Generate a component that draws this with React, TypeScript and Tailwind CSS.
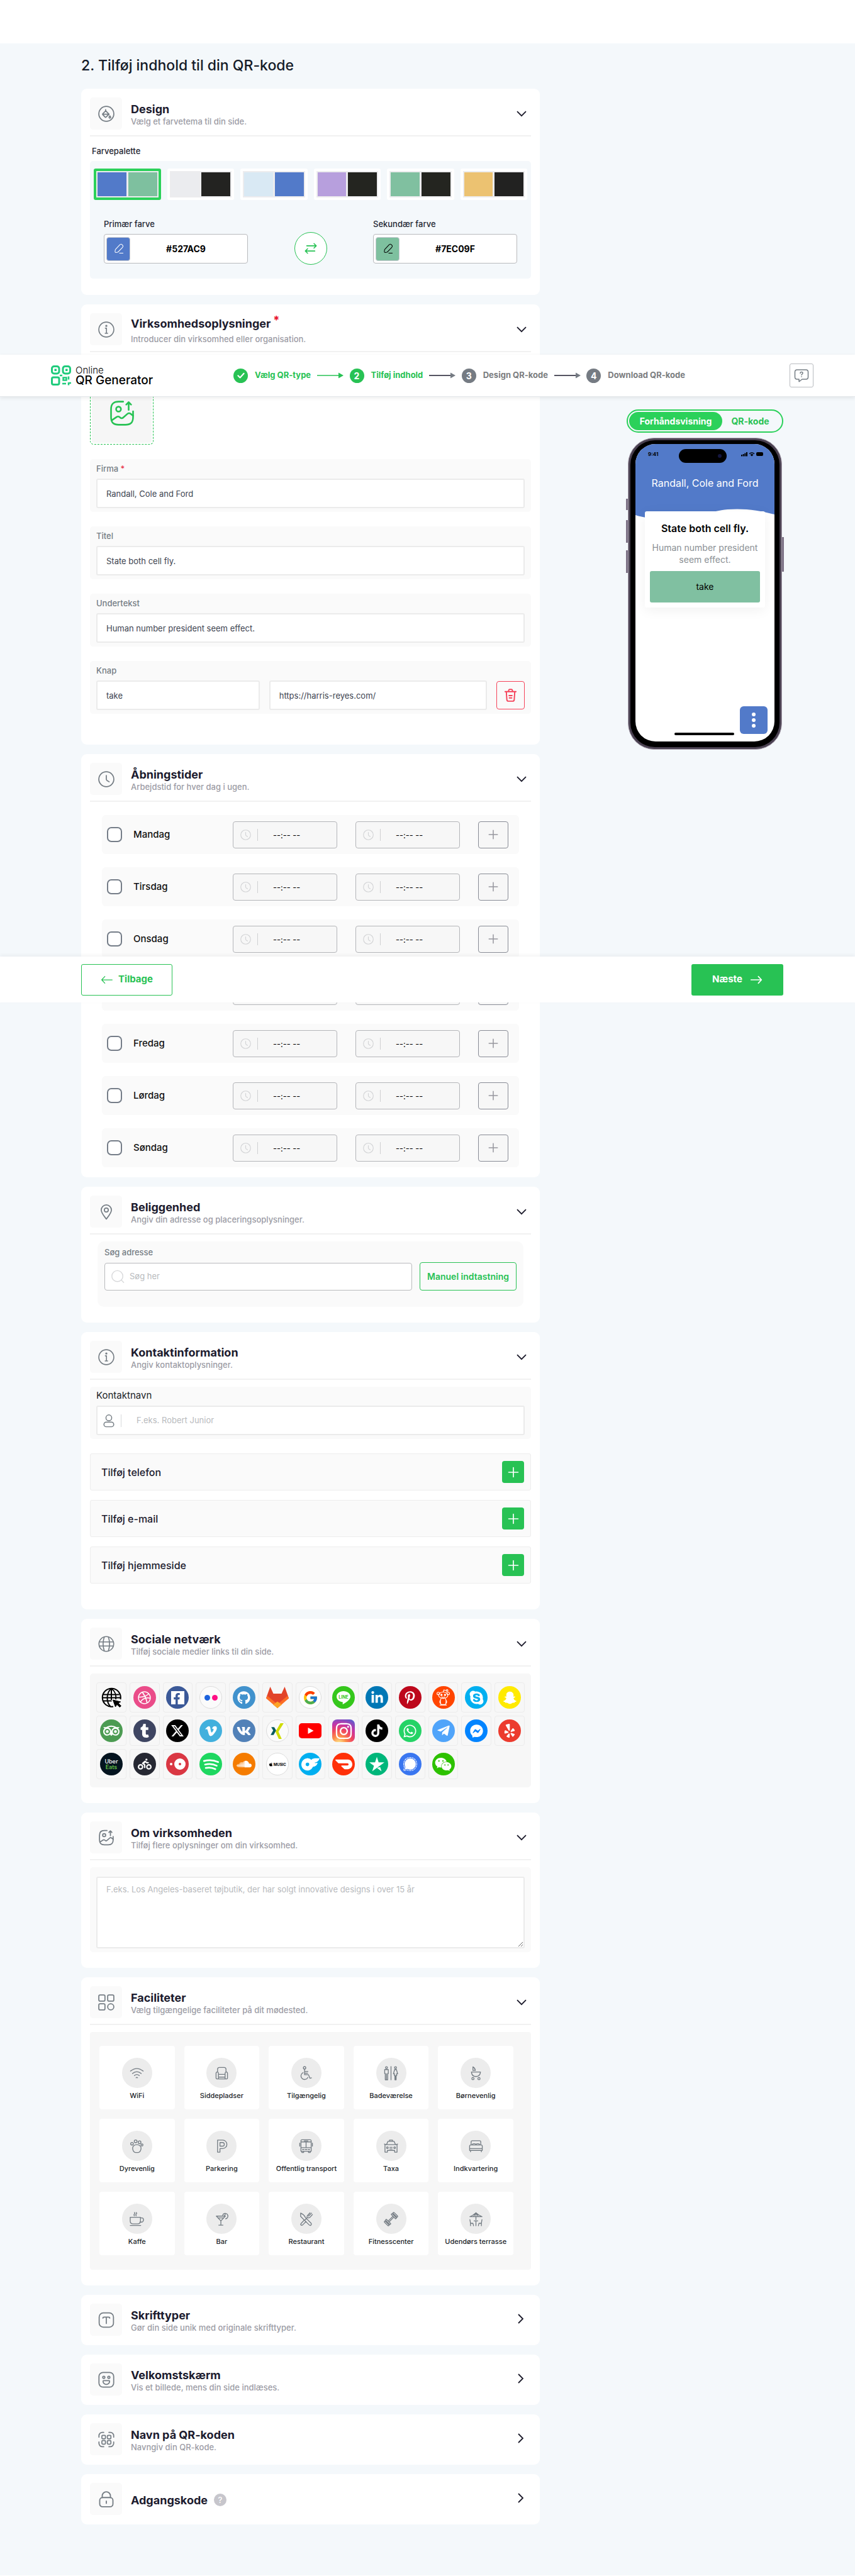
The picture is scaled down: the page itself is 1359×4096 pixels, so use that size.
import { useState, type ReactNode } from "react";
import {
  FaApple, FaBiking, FaDribbble, FaFacebookF, FaFacebookMessenger, FaGithub, FaInstagram,
  FaLinkedinIn, FaPinterestP, FaSkype, FaSnapchatGhost, FaSoundcloud, FaTelegramPlane,
  FaTiktok, FaTumblr, FaVimeoV, FaVk, FaWeixin, FaWhatsapp, FaYelp,
} from "react-icons/fa";
import { FaXTwitter } from "react-icons/fa6";
import { FcGoogle } from "react-icons/fc";
import { SiDoordash, SiOnlyfans, SiSignal, SiTripadvisor, SiTrustpilot } from "react-icons/si";

/* ---------- line icons ---------- */

function Line({ children, className = "size-[26px]", w = 1.6 }: { children: ReactNode; className?: string; w?: number }) {
  return (
    <svg viewBox="0 0 24 24" fill="none" stroke="currentColor" strokeWidth={w} strokeLinecap="round" strokeLinejoin="round" className={className} aria-hidden="true">
      {children}
    </svg>
  );
}

const InfoIcon = () => (
  <Line w={1.5}>
    <circle cx="12" cy="12" r="11" />
    <path d="M10.5 10h1.700v7.500M10.300 17.500h3.600" />
    <circle cx="12" cy="6.600" r=".8" />
  </Line>
);
const BucketIcon = () => (
  <Line>
    <circle cx="12" cy="12" r="11" />
    <path d="M11 5.800v2.600M11 7.600l5 4.900-4.400 4.300a1 1 0 0 1-1.400 0L6.800 13.300a1 1 0 0 1 0-1.400zM6.600 12.600H16" />
    <path d="M17.200 15c.9 1.200 1.200 1.500 1.200 2.100a1.200 1.200 0 0 1-2.400 0c0-.6.3-.9 1.200-2.100z" />
  </Line>
);
const ClockIcon = ({ className }: { className?: string }) => (
  <Line className={className}>
    <circle cx="12" cy="12" r="11" />
    <path d="M12 6.500v5.500q.1 1 .9 1.800l3.300 2" />
  </Line>
);
const PinIcon = () => (
  <Line>
    <path d="M12 22.500C8.500 18 4.500 13.500 4.500 9.300a7.500 7.500 0 0 1 15 0c0 4.200-4 8.700-7.500 13.200z" />
    <circle cx="12" cy="9.300" r="2.900" />
  </Line>
);
const GlobeIcon = () => (
  <Line w={1.5}>
    <circle cx="12" cy="12" r="10.800" />
    <path d="M1.500 9h21M1.500 15h21M9 1.700c-2.300 6.800-2.300 13.800 0 20.600M15 1.700c2.300 6.800 2.300 13.800 0 20.600" />
  </Line>
);
const ImageUpIcon = ({ className, w }: { className?: string; w?: number }) => (
  <Line className={className} w={w}>
    <path d="M13 1.500H9C4 1.500 2 3.500 2 8.500v7c0 5 2 7 7 7h6c5 0 7-2 7-7v-5.200" />
    <circle cx="8.800" cy="8.300" r="2.200" />
    <path d="M18 9V2.200M15.800 4.200 18 2l2.200 2.200M2.600 18.500l4.600-3.100c.8-.5 1.900-.4 2.600.2l.5.400c.8.700 2 .7 2.700 0l4-3.500c.8-.7 2-.7 2.700 0L22 14.300" />
  </Line>
);
const GridIcon = () => (
  <Line>
    <rect x="1" y="1" width="9" height="9" rx="1.800" />
    <rect x="14" y="1" width="9" height="9" rx="1.800" />
    <rect x="1" y="14" width="9" height="9" rx="1.800" />
    <circle cx="18.500" cy="18.500" r="4.500" />
  </Line>
);
const FontIcon = () => (
  <Line>
    <rect x="1.500" y="1.500" width="21" height="21" rx="6" />
    <path d="M7 9.200c0-1 .6-1.500 1.700-1.500h6.600c1.100 0 1.700.5 1.700 1.500M12 7.700V17" />
  </Line>
);
const SmileIcon = () => (
  <Line>
    <rect x="1.200" y="1.200" width="21.600" height="21.600" rx="6" />
    <circle cx="8.300" cy="8.400" r="1.600" />
    <circle cx="15.700" cy="8.400" r="1.600" />
    <path d="M7.900 13.300h8.200c.4 0 .7.300.7.700a4.800 4.800 0 0 1-9.600 0c0-.4.300-.7.700-.7z" />
  </Line>
);
const QrIcon = () => (
  <Line>
    <path d="M1.200 8.500V6.500a5 5 0 0 1 5-5h2M15.800 1.500h2a5 5 0 0 1 5 5v2M22.800 15.500v2a5 5 0 0 1-5 5h-2M8.200 22.500h-2a5 5 0 0 1-5-5v-2" />
    <rect x="5.500" y="5.800" width="5.200" height="5.200" rx="1.200" />
    <rect x="13.500" y="5.800" width="5.200" height="5.200" rx="1.200" />
    <rect x="5.500" y="13.600" width="5.200" height="5.200" rx="1.200" />
    <rect x="13.500" y="13.600" width="5.200" height="5.200" rx="1.200" />
  </Line>
);
const LockIcon = () => (
  <Line w={1.700}>
    <rect x="2.300" y="9.500" width="19.400" height="13.500" rx="4" />
    <path d="M6 9.500V7a6 6 0 0 1 12 0v2.500M12 14.700v3.200" />
  </Line>
);
const TrashIcon = () => (
  <Line className="size-[23px]" w={2}>
    <path d="M3 6h18M8.500 5.800l.6-2.500c.2-.8.700-1.100 1.400-1.100h3c.7 0 1.200.3 1.400 1.100l.6 2.500M5 6.500l.9 13c.1 1.500.9 2.300 2.400 2.300h7.400c1.500 0 2.300-.8 2.400-2.300l.9-13M9.500 12.500h5M10 16.500h4" />
  </Line>
);
const PlusIcon = ({ className }: { className?: string }) => (
  <Line className={className} w={2}>
    <path d="M12 3v18M3 12h18" />
  </Line>
);
const PencilIcon = () => (
  <Line className="size-[17px]" w={1.500}>
    <path d="M14.500 3.500 5.300 13.200c-.4.400-.7 1.100-.8 1.600l-.4 3.600c-.1 1.300.8 2.200 2.100 2l3.600-.6c.5-.1 1.200-.5 1.500-.9l9.200-9.700c1.600-1.700 2.300-3.600-.2-5.900-2.400-2.300-4.200-1.500-5.800.2zM14 22h8" />
  </Line>
);
const Chevron = ({ open }: { open: boolean }) => (
  <svg viewBox="0 0 16 16" fill="none" stroke="#1c1b2b" strokeWidth="1.800" className="size-[16px]" aria-hidden="true">
    <path d={open ? "M1 4.200l7 7 7-7" : "M3 1l7 7-7 7"} />
  </svg>
);

/* ---------- cards ---------- */

function Card({ icon, title, sub, required, help, closed, children, className = "" }: {
  icon: ReactNode; title: string; sub?: string; required?: boolean; help?: boolean; closed?: boolean; children?: ReactNode; className?: string;
}) {
  return (
    <section className={`rounded-[9px] bg-white px-[14px] ${className}`}>
      <header className={`flex items-center pt-[14px] ${closed ? "pb-[15px]" : "border-b-2 border-[#f1f1f1] pb-[9px]"}`}>
        <div className="flex size-[51px] shrink-0 items-center justify-center rounded-[5px] bg-[#fafafa] text-[#757d84]">{icon}</div>
        <div className="ml-[14px] flex-1 pt-[3px]">
          <h2 className="flex items-center text-[18px] leading-[21px] font-bold text-[#1c1b2e]">
            {title}
            {required && <span className="mb-3 ml-1 text-[18px] leading-[12px] text-[#e8102c]">*</span>}
            {help && <span className="ml-[10px] flex size-[20px] items-center justify-center rounded-full bg-[#c7c6cc] text-[13px] font-medium text-white">?</span>}
          </h2>
          {sub && <p className={`text-[13px] leading-[18px] font-medium text-[#9c9ca5] ${required ? "mt-[3px]" : ""}`}>{sub}</p>}
        </div>
        <button type="button" aria-label={title} className={`mr-[5px] flex size-[20px] items-center justify-center ${closed ? "mb-1" : ""}`}>
          <Chevron open={!closed} />
        </button>
      </header>
      {children}
    </section>
  );
}

function Field({ id, label, required, children }: { id: string; label: string; required?: boolean; children: ReactNode }) {
  return (
    <div className="rounded-[5px] bg-[#fafafa] px-[10px] pt-[5px] pb-[6px]">
      <label htmlFor={id} className="mb-[6px] block text-[13px] leading-[20px] font-medium text-[#757d84]">
        {label}
        {required && <span className="text-[#e8344a]"> *</span>}
      </label>
      {children}
    </div>
  );
}

const inputClass = "h-[47px] w-full min-w-0 rounded-[3px] border-2 border-[#ebebeb] bg-white px-[14px] text-[13px] text-[#3d4450] outline-none";

/* ---------- design ---------- */

const palettes = [
  ["bg-[#527ac9]", "bg-[#7ec09f]"],
  ["bg-[#ebecef]", "bg-[#232321]"],
  ["bg-[#d9e9f4]", "bg-[#527ac9]"],
  ["bg-[#b79fdd]", "bg-[#242520]"],
  ["bg-[#80c0a0]", "bg-[#242520]"],
  ["bg-[#ecc271]", "bg-[#222221]"],
];

function ColorField({ id, label, value, swatch }: { id: string; label: string; value: string; swatch: string }) {
  return (
    <div className="w-[229px]">
      <label htmlFor={id} className="mb-[6px] block text-[13px] leading-[20px] font-medium text-[#1f2733]">{label}</label>
      <div className="flex h-[47px] items-center rounded-[4px] border border-[#b9babd] bg-white px-[3px]">
        <button type="button" aria-label={`Vælg ${label}`} className={`flex size-[38px] items-center justify-center rounded-[4px] border border-[#c5c9d0] ${swatch}`}>
          <PencilIcon />
        </button>
        <input id={id} defaultValue={value} className="min-w-0 flex-1 bg-transparent pr-[6px] text-center text-[14px] font-bold text-black outline-none" />
      </div>
    </div>
  );
}

/* ---------- opening hours ---------- */

const days = ["Mandag", "Tirsdag", "Onsdag", "Torsdag", "Fredag", "Lørdag", "Søndag"];

function TimeBox({ label }: { label: string }) {
  return (
    <div className="flex h-[43px] w-[166px] items-center rounded-[4px] border border-[#b4b5b9] bg-[#f7f7f7] pl-[11px] text-[#d3d4d6]">
      <ClockIcon className="size-[17px]" />
      <span className="ml-[10px] h-[19px] w-px bg-[#cfd0d2]" />
      <input aria-label={label} readOnly value="--:-- --" className="ml-[24px] w-[90px] bg-transparent pt-[3px] text-[13px] text-black outline-none" />
    </div>
  );
}

/* ---------- social networks ---------- */

const disc = "flex size-[36px] items-center justify-center rounded-full text-white";

const socials: [string, ReactNode][] = [
  ["Hjemmeside", (
    <svg viewBox="0 0 36 36" className="size-[36px]" fill="none" stroke="#000" strokeWidth="2">
      <path d="M21 32.500A14.500 14.500 0 1 1 32.500 21M4.500 13.500h26M4.500 23.500h14M3 18.500h30M18 4v18M18 4c-8 6-9 21-1 29M18 4c6 4 8 11 7 17" />
      <path d="M20.500 22l4 11 2.300-3.800 4.600 4.300 2-2-4.500-4.500 3.800-2z" fill="#000" strokeWidth="1" />
    </svg>
  )],
  ["Dribbble", <span className={`${disc} bg-[#ea4c89]`}><FaDribbble size={21} /></span>],
  ["Facebook", <span className={`${disc} bg-[#3b5998]`}><span className="flex size-[21px] items-end justify-end bg-white pr-[3px] text-[#3b5998]"><FaFacebookF size={18} /></span></span>],
  ["Flickr", <span className={`${disc} gap-[3px] border border-[#dcdcdc] bg-[#fbfbfb]`}><i className="size-[9px] rounded-full bg-[#1c62dd]" /><i className="size-[9px] rounded-full bg-[#ff0f84]" /></span>],
  ["GitHub", <span className={`${disc} bg-[#4192cd]`}><FaGithub size={21} /></span>],
  ["GitLab", (
    <svg viewBox="0 0 36 36" className="size-[36px]">
      <path d="M0 19 6.500 1l5 11h13l5-11L36 19 18 33z" fill="#e24329" />
      <path d="M2 15.500 18 29l16-13.500 2 4L18 35 0 19.500z" fill="#fc6d26" />
      <path d="M11 29.500 18 24.500l7 5L18 35z" fill="#fca326" />
    </svg>
  )],
  ["Google", <span className={`${disc} border border-[#dcdcdc] bg-white`}><FcGoogle size={25} /></span>],
  ["LINE", (
    <span className={`${disc} bg-[#35c71c]`}>
      <svg viewBox="0 0 24 24" className="size-[24px]" fill="#fff">
        <path d="M12 2C6 2 1 5.900 1 10.700c0 4.300 3.900 7.900 9.100 8.600 1.300.3.700 1.500.4 3 0 .4.200.6.700.4C13 21.900 23 16 23 10.700 23 5.900 18 2 12 2z" />
        <text x="12" y="13.500" textAnchor="middle" fontSize="7" fontWeight="700" fill="#35c71c" fontFamily="Inter">LINE</text>
      </svg>
    </span>
  )],
  ["LinkedIn", <span className={`${disc} bg-[#0077b5]`}><FaLinkedinIn size={21} /></span>],
  ["Pinterest", <span className={`${disc} bg-[#bd081c]`}><FaPinterestP size={21} /></span>],
  ["Reddit", (
    <span className={`${disc} bg-[#ff4500]`}>
      <svg viewBox="0 0 24 24" className="size-[27px]" fill="none" stroke="#fff" strokeWidth="1">
        <ellipse cx="12" cy="8.500" rx="6.500" ry="4.500" />
        <circle cx="5" cy="6" r="1.800" /><circle cx="19" cy="6" r="1.800" />
        <circle cx="9.500" cy="8" r="1" fill="#fff" /><circle cx="14.500" cy="8" r="1" fill="#fff" />
        <path d="M9.500 10.800q2.500 1.500 5 0M12 4l.8-3 3.500.8M9 12.800c-1.500 3-1 6.500 0 8.700h6c1-2.200 1.500-5.700 0-8.700M8.500 15c-2 1.500-1.500 4-.5 5M15.500 15c2 1.500 1.500 4 .5 5M7 22.300h10" />
        <circle cx="17.500" cy="1.800" r="1.200" />
      </svg>
    </span>
  )],
  ["Skype", <span className={`${disc} bg-[#00aff0]`}><FaSkype size={25} /></span>],
  ["Snapchat", <span className={`${disc} bg-[#ffea00]`}><FaSnapchatGhost size={21} /></span>],
  ["Tripadvisor", <span className={`${disc} bg-[#4c9b52]`}><SiTripadvisor size={26} /></span>],
  ["Tumblr", <span className={`${disc} bg-[#3e4562]`}><FaTumblr size={22} /></span>],
  ["X", <span className={`${disc} bg-black`}><FaXTwitter size={22} /></span>],
  ["Vimeo", <span className={`${disc} bg-[#42b0dd]`}><FaVimeoV size={21} /></span>],
  ["VK", <span className={`${disc} bg-[#5181b8]`}><FaVk size={23} /></span>],
  ["Xing", (
    <span className={`${disc} border border-[#dcdcdc] bg-[#fbfbfb]`}>
      <svg viewBox="0 0 24 24" className="size-[25px]"><path d="M3 6h4.500l3 5-4 7H2l4-7z" fill="#0a5c5f" /><path d="M17 0h5l-8 13 5 11h-4.500L9.500 13z" fill="#cfdc00" /></svg>
    </span>
  )],
  ["YouTube", (
    <svg viewBox="0 0 36 24" className="h-[24px] w-[36px]"><rect width="36" height="24" rx="5" fill="#f00" /><path d="M14.500 7v10l9-5z" fill="#fff" /></svg>
  )],
  ["Instagram", <span className="flex size-[36px] items-center justify-center rounded-[8px] bg-[radial-gradient(circle_at_30%_107%,#fdf497_0%,#fd8d49_25%,#f0455f_48%,#c435a8_68%,#4168d9_100%)] text-white"><FaInstagram size={29} /></span>],
  ["TikTok", <span className={`${disc} bg-black`}><FaTiktok size={20} /></span>],
  ["WhatsApp", <span className={`${disc} bg-[#25d366]`}><FaWhatsapp size={23} /></span>],
  ["Telegram", <span className={`${disc} bg-[#50a4fa]`}><FaTelegramPlane size={22} /></span>],
  ["Messenger", <span className={`${disc} bg-[#0284ff]`}><FaFacebookMessenger size={21} /></span>],
  ["Yelp", <span className={`${disc} bg-[#ec3b2e]`}><FaYelp size={22} /></span>],
  ["Uber Eats", <span className={`${disc} flex-col bg-[#04141f] text-[9px] leading-[9px] font-medium`}><span>Uber</span><span className="text-[#6fd34a]">Eats</span></span>],
  ["Postmates", <span className={`${disc} bg-[#262833]`}><FaBiking size={22} /></span>],
  ["OpenTable", <span className={`${disc} gap-[3px] bg-[#da3743]`}><i className="size-[4px] rounded-full bg-white" /><i className="size-[18px] rounded-full border-[7px] border-white" /></span>],
  ["Spotify", (
    <span className={`${disc} bg-[#1ed760]`}>
      <svg viewBox="0 0 24 24" className="size-[27px]" fill="none" stroke="#fff" strokeWidth="2.400" strokeLinecap="round"><path d="M2 7.200q10.500-2.700 20 1.500M3.500 12.200q9-2.200 16.500 1.700M4.500 17q7.500-1.500 13.500 1.700" /></svg>
    </span>
  )],
  ["SoundCloud", <span className={`${disc} bg-[#f57c00]`}><FaSoundcloud size={24} /></span>],
  ["Apple Music", <span className="flex size-[36px] items-center justify-center gap-px rounded-full border border-[#dcdcdc] bg-white text-[6px] font-bold text-black"><FaApple size={7} />MUSIC</span>],
  ["OnlyFans", <span className={`${disc} bg-[#00aff0]`}><SiOnlyfans size={29} /></span>],
  ["DoorDash", <span className={`${disc} bg-[#ff3008]`}><SiDoordash size={27} /></span>],
  ["Trustpilot", <span className={`${disc} bg-[#00b67a]`}><SiTrustpilot size={24} /></span>],
  ["Signal", <span className={`${disc} bg-[#3a76f0]`}><SiSignal size={22} /></span>],
  ["WeChat", <span className={`${disc} bg-[#2dc100]`}><FaWeixin size={27} /></span>],
];

/* ---------- facilities ---------- */

const facilities: [string, ReactNode][] = [
  ["WiFi", <path d="M1.500 8.500q10.500-8.500 21 0M4.800 12.500q7.200-6 14.400 0M8 16q4-3.500 8 0M10.800 19.500q1.200-1.200 2.400 0" />],
  ["Siddepladser", <path d="M5 10V5.500a3 3 0 0 1 3-3h8a3 3 0 0 1 3 3V10M5 10a2 2 0 0 0-2.500 2v8q0 1.500 1.500 1.500h16q1.500 0 1.500-1.500v-8A2 2 0 0 0 19 10q-1.500.500-1.500 2.500V14h-11v-1.500Q6.500 10.500 5 10zM6.500 14v7.500M17.500 14v7.500M6.500 18.500h11" />],
  ["Tilgængelig", <><circle cx="9.500" cy="3" r="2" /><path d="M9.500 5v9.500h6.500l2.500 6 2.500-.8M9.500 9H15M9.500 12h5M7 11a6 6 0 1 0 8 8" /></>],
  ["Badeværelse", <><circle cx="4.500" cy="2.800" r="1.600" /><circle cx="19.500" cy="2.800" r="1.600" /><path d="M12 1v22M1.500 6h6v6.500H6.500V23h-4V12.500h-1zM4.500 13v10M18 6h3l2 7h-1.800l.3 3h-1v7h-2v-7h-1l.3-3H16zM19.500 16v7" /></>],
  ["Børnevenlig", <><path d="M7 7.500V1.500q3.500 2 4 6zM4.500 10h15q-.5 7.500-7.500 7.500T4.500 10z" /><circle cx="7" cy="21" r="1.800" /><circle cx="17" cy="21" r="1.800" /></>],
  ["Dyrevenlig", <><circle cx="10" cy="4" r="2.300" /><circle cx="16.500" cy="5.500" r="2.300" /><circle cx="20.500" cy="10" r="1.700" /><circle cx="4" cy="8" r="2.200" /><path d="M5 15c0-3 3-5.500 7-5.500s7 2.500 7 5.500c0 4-2 7.500-4.500 7.500h-5C7 22.500 5 19 5 15z" /></>],
  ["Parkering", <path d="M5 2h8.500a7 7 0 0 1 0 14H9v6H5zM9 6v6h4.200a3 3 0 0 0 0-6z" />],
  ["Offentlig transport", <path d="M5 1.500h14q1.500 0 1.500 2V20.500h-17v-17q0-2 1.500-2zM3.500 5h17M3.500 14.500h17M12 5v9.500M9 3.200h6M1.500 7v5M22.500 7v5M6 17.500h2.500M15.500 17.500H18M10.500 17.500h3M5 20.500v2h3v-2M16 20.500v2h3v-2" />],
  ["Taxa", <><path d="M4.500 9.500 7 4h10l2.500 5.500M1 8.500l3 1h16l3-1M9.500 4V2h5v2M2 9.500V22h4v-3h12v3h4V9.500M10 14h4M10 16.500h4" /><circle cx="6" cy="14.500" r="1.400" /><circle cx="18" cy="14.500" r="1.400" /></>],
  ["Indkvartering", <path d="M4 10V5q0-2 2-2h12q2 0 2 2v5M1.500 19v-7q0-2 2-2h17q2 0 2 2v7zM1.500 16h21M3 19v2.500M21 19v2.500M6 10q0-2 2-2h2q1.500 0 2 2 .5-2 2-2h2q2 0 2 2" />],
  ["Kaffe", <path d="M1 9h17v6q0 5-5 5H6q-5 0-5-5zM18 10h2.500q2.500 0 2.500 3t-2.500 4H17M1 22.500h17.500M8 6.500q-1.500-1.500 0-2.800T8 1M11 6.500q-1.500-1.500 0-2.800T11 1" />],
  ["Bar", <><path d="M3 7h15l-7.500 8zM10.500 15v7M7 22h7M6 10h9" /><path d="M13.500 5.500a4.500 4.500 0 1 1 5 6M16 7l2-3" /></>],
  ["Restaurant", <path d="M3 2q6 3 8 7.500L20.500 19q1 2-.5 3t-3-.5L3 7.500zM21 2l-5 5M22.500 4.500l-4.500 5M18.500 1.500l-4.500 5q-1 2 0 3t3 0M13.500 10 10 13.500M9 13.500l-5.500 6q-1 2 .5 2.500t2.500-.5L12 16" />],
  ["Fitnesscenter", <path d="M12.500 4.500q0-1.500 1.500-1.500l7 7q0 1.500-1.500 1.500zM15 2q1-1.500 2.200-.8L22.800 6.800Q23.500 8 22 9zM4.500 12.500q-1.500 0-1.500 1.500l7 7q1.500 0 1.500-1.500zM2 15q-1.500 1-.8 2.200l5.600 5.600Q8 23.500 9 22zM8 14.500 14.500 8M9.500 16 16 9.500" />],
  ["Udendørs terrasse", <path d="M2 8q4-1.500 10-6.500Q18 6.500 22 8zM12 1.500V13M8 8l4-6.500L16 8M9 15h6M12 15v8M2 13l1 6h4l1 4M3 19v4M22 13l-1 6h-4l-1 4M21 19v4" />],
];

/* ---------- header ---------- */

function StepArrow({ line, head }: { line: string; head: string }) {
  return (
    <svg viewBox="0 0 42 10" className="h-[10px] w-[42px] shrink-0" aria-hidden="true">
      <path d="M0 5h36" stroke={line} strokeWidth="1.500" />
      <path d="M34 .5 42 5l-8 4.500z" fill={head} />
    </svg>
  );
}

function Step({ mark, label, active }: { mark: ReactNode; label: string; active?: boolean }) {
  return (
    <li className={`flex items-center gap-[11px] text-[13px] font-bold whitespace-nowrap ${active ? "text-[#28c254]" : "text-[#7b7d80]"}`}>
      <span className={`flex size-[23px] items-center justify-center rounded-full text-[14px] text-white ${active ? "bg-[#28c254]" : "bg-[#757b83]"}`}>{mark}</span>
      {label}
    </li>
  );
}

function TopBar() {
  return (
    <header className="absolute top-[564px] right-0 left-0 z-10 flex h-[67px] items-center justify-between border-b border-[#e4e7ea] bg-white pr-[66px] pl-[81px] shadow-[0_2px_6px_rgba(0,0,0,0.08)]">
      <a href="#" className="flex items-center gap-[7px] text-black">
        <svg viewBox="0 0 32 32" className="size-[32px]" fill="none" stroke="#1fcb7c" strokeWidth="3" aria-hidden="true">
          <rect x="1.500" y="1.500" width="11.500" height="11.500" rx="3.500" />
          <rect x="19" y="1.500" width="11.500" height="11.500" rx="3.500" />
          <rect x="1.500" y="19" width="11.500" height="11.500" rx="2.500" />
          <path d="M5.500 7.200h3.500M23 7.200h3.500" strokeWidth="3.500" />
          <path d="M14 16h4M19.500 23.500v-4h5v4zM28 17.500v5M28 27v4.500M18 29h6M29 28h3" strokeWidth="2.500" />
        </svg>
        <span className="flex flex-col">
          <span className="text-[15px] leading-[15px] font-light">Online</span>
          <span className="text-[19px] leading-[18px] font-medium">QR Generator</span>
        </span>
      </a>
      <ol className="mr-[34px] ml-auto flex w-[718px] items-center justify-between">
        <Step active label="Vælg QR-type" mark={<Line className="size-[14px]" w={3.500}><path d="M4 12.500l5.500 5.500L20 6.500" /></Line>} />
        <li><StepArrow line="#28c254" head="#28c254" /></li>
        <Step active label="Tilføj indhold" mark="2" />
        <li><StepArrow line="#1c1b2e" head="#757b83" /></li>
        <Step label="Design QR-kode" mark="3" />
        <li><StepArrow line="#1c1b2e" head="#757b83" /></li>
        <Step label="Download QR-kode" mark="4" />
      </ol>
      <button type="button" aria-label="Hjælp" className="ml-[132px] flex size-[38px] items-center justify-center rounded-[3px] border border-[#b9bcc0] text-[#757d84]">
        <Line className="size-[24px]" w={1.500}>
          <path d="M5 3h14q3.500 0 3.500 3.500v8q0 3.500-3.500 3.500h-6L8.500 21.500Q8 22 8 21v-3H5q-3.500 0-3.500-3.500v-8Q1.500 3 5 3z" />
          <path d="M10 8.500q0-2 2-2t2 1.800c0 1.500-2 1.500-2 3M12 13.700v.2" />
        </Line>
      </button>
    </header>
  );
}

function BottomBar() {
  return (
    <footer className="absolute top-[1521px] right-0 left-0 z-10 flex h-[73px] items-center justify-between bg-white pr-[114px] pl-[129px] shadow-[0_-2px_6px_rgba(0,0,0,0.05)]">
      <button type="button" className="flex h-[50px] w-[145px] items-center justify-center gap-[8px] rounded-[3px] border border-[#28c254] text-[15px] font-bold text-[#28c254]">
        <Line className="size-[20px]" w={1.500}><path d="M22 12H2M8 5.500 2 12l6 6.500" /></Line>
        Tilbage
      </button>
      <button type="button" className="flex h-[50px] w-[146px] items-center justify-center gap-[12px] rounded-[3px] bg-[#28c254] text-[15px] font-bold text-white">
        Næste
        <Line className="size-[20px]" w={2}><path d="M2 12h20M16 5.500l6 6.500-6 6.500" /></Line>
      </button>
    </footer>
  );
}

/* ---------- phone preview ---------- */

function Preview() {
  const [tab, setTab] = useState<"preview" | "code">("preview");
  return (
    <aside className="mt-[582px] w-[249px] shrink-0">
      <div className="flex h-[37px] rounded-full border-2 border-[#2bd15a] p-[2px] text-[14px] font-bold">
        <button type="button" aria-pressed={tab === "preview"} onClick={() => setTab("preview")} className="w-[148px] rounded-full bg-[#2bd15a] text-white">Forhåndsvisning</button>
        <button type="button" aria-pressed={tab === "code"} onClick={() => setTab("code")} className="flex-1 pr-[4px] text-[#28c254]">QR-kode</button>
      </div>
      <div className="relative mx-[2px] mt-[8px] h-[496px] rounded-[42px] border border-[#a9a1ae] bg-[#4b4252] p-[3px]">
        <span className="absolute top-[96px] -left-[4px] h-[18px] w-[3px] bg-[#7d7286]" />
        <span className="absolute top-[130px] -left-[4px] h-[36px] w-[3px] bg-[#7d7286]" />
        <span className="absolute top-[178px] -left-[4px] h-[36px] w-[3px] bg-[#7d7286]" />
        <span className="absolute top-[157px] -right-[4px] h-[55px] w-[3px] bg-[#7d7286]" />
        <div className="h-full rounded-[39px] bg-black px-[8px] pt-[6px] pb-[9px]">
          <div className="relative flex h-full flex-col overflow-hidden rounded-[32px] bg-white">
            <div className="relative flex h-[30px] items-start justify-between bg-[#527ac9] px-[17px] pt-[10px] text-black">
              <span className="ml-[3px] text-[8px] leading-[12px] font-bold">9:41</span>
              <span className="absolute top-[8px] left-[69px] flex h-[22px] w-[76px] items-center justify-end rounded-full bg-black pr-[8px]">
                <i className="size-[6px] rounded-full bg-[#14163f]" />
              </span>
              <svg viewBox="0 0 36 10" className="mt-[1px] h-[10px] w-[36px]" aria-hidden="true">
                <path d="M0 6h2v2.500H0zM2.700 5h2v3.500h-2zM5.400 3.500h2v5h-2zM8 2h2v6.500H8z" />
                <path d="M12.500 4q4.500-3.500 9 0l-1 1q-3.500-2.500-7 0zM14.500 6q2.500-2 5 0L17 8.500z" />
                <rect x="24" y="2" width="11" height="6" rx="2" />
              </svg>
            </div>
            <div className="h-[64px] bg-[#527ac9] pt-[20px] text-center text-[16px] leading-[24px] text-white">Randall, Cole and Ford</div>
            <svg viewBox="0 0 219 26" preserveAspectRatio="none" className="h-[26px] w-full shrink-0" aria-hidden="true">
              <path d="M0 0H219V18C195 11 170 8 145 10 120 12 90 26 50 26 30 26 12 23 0 19z" fill="#527ac9" />
            </svg>
            <div className="relative mx-[15px] -mt-[13px] rounded-[3px] bg-white px-[8px] pt-[15px] pb-[8px] text-center shadow-[0_4px_20px_rgba(0,0,0,0.06)]">
              <h3 className="text-[16px] leading-[24px] font-semibold text-black">State both cell fly.</h3>
              <p className="mt-[9px] mb-[9px] text-[14px] leading-[19px] text-[#8a8f94]">Human number president seem effect.</p>
              <a href="#" className="block rounded-[3px] bg-[#80c0a1] text-[14px] leading-[50px] text-black">take</a>
            </div>
            <button type="button" aria-label="Menu" className="absolute right-[11px] bottom-[12px] flex size-[44px] flex-col items-center justify-center gap-[3px] rounded-[6px] bg-[#527ac9]">
              <i className="size-[6px] rounded-full bg-white" />
              <i className="size-[6px] rounded-full bg-white" />
              <i className="size-[6px] rounded-full bg-white" />
            </button>
            <span className="absolute bottom-[10px] left-[62px] h-[4px] w-[95px] rounded-full bg-black" />
          </div>
        </div>
      </div>
    </aside>
  );
}

/* ---------- page ---------- */

export default function App() {
  return (
    <div className="relative bg-[#f4f8fb] font-['Inter',sans-serif]">
      <div className="h-[69px] bg-white" />
      <TopBar />
      <BottomBar />
      <main className="flex items-start justify-between gap-[138px] pr-[114px] pb-[81px] pl-[129px]">
        <div className="flex min-w-0 flex-1 flex-col gap-[15px] pt-[21px]">
          <h1 className="mb-[8px] text-[23px] leading-[28px] font-medium text-[#141b28]">2. Tilføj indhold til din QR-kode</h1>

          <Card icon={<BucketIcon />} title="Design" sub="Vælg et farvetema til din side." className="pb-[26px]">
            <h3 className="mt-[13px] mb-[6px] ml-[3px] text-[13px] leading-[20px] font-medium text-[#1f2733]">Farvepalette</h3>
            <div className="rounded-[5px] bg-[#f4f8fb] px-[6px] pt-[12px] pb-[24px]">
              <div className="grid grid-cols-6 gap-[10px]">
                {palettes.map(([a, b], i) => (
                  <button key={i} type="button" aria-label={`Palette ${i + 1}`} className={`h-[50px] rounded-[3px] border-4 ${i === 0 ? "border-[#2bd15a] bg-[#2bd15a]" : "border-white bg-white"}`}>
                    <span className="flex h-full gap-[3px] bg-[#ececee] p-[2px]">
                      <span className={`flex-1 ${a}`} />
                      <span className={`flex-1 ${b}`} />
                    </span>
                  </button>
                ))}
              </div>
              <div className="mt-[28px] flex items-end justify-between px-[16px]">
                <ColorField id="primary" label="Primær farve" value="#527AC9" swatch="bg-[#527ac9] text-white" />
                <button type="button" aria-label="Byt farver" className="-mb-[2px] flex size-[52px] items-center justify-center rounded-full border border-[#28c254] bg-white text-[#28c254]">
                  <Line className="size-[22px]" w={1.700}><path d="M5 7.500h16.500M17.500 3.500l4 4-4 4M19 16.500H2.500M6.500 12.500l-4 4 4 4" /></Line>
                </button>
                <ColorField id="secondary" label="Sekundær farve" value="#7EC09F" swatch="bg-[#7ec09f] text-black" />
              </div>
            </div>
          </Card>

          <Card icon={<InfoIcon />} title="Virksomhedsoplysninger" sub="Introducer din virksomhed eller organisation." required className="pb-[49px]">
            <button type="button" aria-label="Upload billede" className="mt-[46px] flex size-[101px] items-center justify-center rounded-[6px] border border-dashed border-[#28c254] p-[2px] text-[#28c254]">
              <span className="flex size-full items-center justify-center rounded-[4px] bg-[#f6f6f6]">
                <ImageUpIcon className="size-[42px]" w={1.500} />
              </span>
            </button>
            <div className="mt-[23px] flex flex-col gap-[23px]">
              <Field id="company" label="Firma" required><input id="company" defaultValue="Randall, Cole and Ford" className={inputClass} /></Field>
              <Field id="title" label="Titel"><input id="title" defaultValue="State both cell fly." className={inputClass} /></Field>
              <Field id="subtitle" label="Undertekst"><input id="subtitle" defaultValue="Human number president seem effect." className={inputClass} /></Field>
              <Field id="button" label="Knap">
                <div className="flex items-center gap-[15px]">
                  <div className="flex-3"><input id="button" defaultValue="take" className={inputClass} /></div>
                  <div className="flex-4"><input aria-label="Link" defaultValue="https://harris-reyes.com/" className={`${inputClass} underline decoration-[#e8344a] decoration-dotted decoration-1 underline-offset-4`} /></div>
                  <button type="button" aria-label="Slet" className="flex h-[45px] w-[45px] items-center justify-center rounded-[4px] border border-[#f5435a] text-[#f5435a]"><TrashIcon /></button>
                </div>
              </Field>
            </div>
          </Card>

          <Card icon={<ClockIcon />} title="Åbningstider" sub="Arbejdstid for hver dag i ugen." className="pb-[16px]">
            <div className="mx-[19px] mt-[21px] flex flex-col gap-[21px]">
              {days.map((d) => (
                <div key={d} className="flex h-[62px] items-center rounded-[6px] bg-[#fafafa] pr-[17px] pl-[8px]">
                  <label className="flex flex-1 items-center gap-[18px] text-[15px] font-medium text-[#111]">
                    <input type="checkbox" className="size-[24px] appearance-none rounded-[7px] border-2 border-[#757d88] bg-white" />
                    {d}
                  </label>
                  <TimeBox label={`${d} åbner`} />
                  <span className="w-[29px]" />
                  <TimeBox label={`${d} lukker`} />
                  <button type="button" aria-label={`Tilføj tid ${d}`} className="ml-[29px] flex h-[43px] w-[48px] items-center justify-center rounded-[4px] border border-[#888b95] bg-[#f7f7f7] text-[#96969e]">
                    <PlusIcon className="size-[18px]" />
                  </button>
                </div>
              ))}
            </div>
          </Card>

          <Card icon={<PinIcon />} title="Beliggenhed" sub="Angiv din adresse og placeringsoplysninger." className="pb-[25px]">
            <div className="mx-[12px] mt-[11px] rounded-[10px] bg-[#fafafa] px-[11px] pt-[7px] pb-[26px]">
              <label htmlFor="address" className="mb-[6px] block text-[13px] leading-[20px] font-medium text-[#757d84]">Søg adresse</label>
              <div className="flex items-end gap-[12px]">
                <div className="flex h-[44px] flex-1 items-center rounded-[4px] border border-[#b9babd] bg-white pl-[9px]">
                  <Line className="size-[22px] text-[#d8d9db]" w={1.500}><circle cx="11.500" cy="11" r="9.500" /><path d="M18.500 18l4 4" /></Line>
                  <input id="address" placeholder="Søg her" className="ml-[8px] min-w-0 flex-1 bg-transparent text-[13px] outline-none placeholder:text-[#b8babd]" />
                </div>
                <button type="button" className="h-[45px] w-[154px] rounded-[4px] border border-[#28c254] text-[14px] font-semibold text-[#28c254]">Manuel indtastning</button>
              </div>
            </div>
          </Card>

          <Card icon={<InfoIcon />} title="Kontaktinformation" sub="Angiv kontaktoplysninger." className="pb-[41px]">
            <div className="mt-[11px] rounded-[5px] bg-[#fafafa] px-[10px] pt-[4px] pb-[6px]">
              <label htmlFor="contact" className="mb-[6px] block text-[15px] leading-[20px] text-[#212529]">Kontaktnavn</label>
              <div className="flex h-[47px] items-center rounded-[3px] border-2 border-[#ebebeb] bg-white pl-[7px] text-[#757d84]">
                <Line className="size-[22px]"><circle cx="12" cy="7" r="5" /><rect x="3.500" y="14.500" width="17" height="8" rx="4" /></Line>
                <span className="ml-[8px] h-[20px] w-px bg-[#d8dadc]" />
                <input id="contact" placeholder="F.eks. Robert Junior" className="ml-[24px] min-w-0 flex-1 bg-transparent text-[13px] outline-none placeholder:text-[#b8babd]" />
              </div>
            </div>
            <div className="mt-[23px] flex flex-col gap-[15px]">
              {["Tilføj telefon", "Tilføj e-mail", "Tilføj hjemmeside"].map((t) => (
                <div key={t} className="flex h-[59px] items-center justify-between rounded-[3px] border border-[#ededed] bg-[#fafafa] pr-[10px] pl-[17px] text-[16px] font-medium text-[#1c1b2e]">
                  {t}
                  <button type="button" aria-label={t} className="flex size-[35px] items-center justify-center rounded-[4px] bg-[#28c254] text-white"><PlusIcon className="size-[20px]" /></button>
                </div>
              ))}
            </div>
          </Card>

          <Card icon={<GlobeIcon />} title="Sociale netværk" sub="Tilføj sociale medier links til din side." className="pb-[25px]">
            <div className="mt-[11px] grid grid-cols-13 gap-[5px] rounded-[5px] bg-[#f7f7f7] px-[10px] pt-[14px] pb-[13px]">
              {socials.map(([name, icon]) => (
                <button key={name} type="button" aria-label={name} className="flex h-[48px] items-center justify-center rounded-[4px] border border-[#ececec]">{icon}</button>
              ))}
            </div>
          </Card>

          <Card icon={<ImageUpIcon />} title="Om virksomheden" sub="Tilføj flere oplysninger om din virksomhed." className="pb-[25px]">
            <div className="mt-[11px] rounded-[5px] bg-[#fafafa] px-[10px] pt-[15px] pb-[6px]">
              <textarea aria-label="Om virksomheden" placeholder="F.eks. Los Angeles-baseret tøjbutik, der har solgt innovative designs i over 15 år" className="block h-[114px] w-full rounded-[3px] border-2 border-[#ebebeb] bg-white px-[14px] py-[9px] text-[13px] leading-[18px] outline-none placeholder:text-[#b8babd]" />
            </div>
          </Card>

          <Card icon={<GridIcon />} title="Faciliteter" sub="Vælg tilgængelige faciliteter på dit mødested." className="pb-[25px]">
            <div className="mt-[11px] grid grid-cols-5 gap-[15px] rounded-[4px] bg-[#f7f7f7] pt-[22px] pr-[28px] pb-[23px] pl-[15px]">
              {facilities.map(([name, icon]) => (
                <button key={name} type="button" className="flex h-[101px] flex-col items-center rounded-[4px] bg-white pt-[19px] text-[11px] leading-[24px] font-medium whitespace-nowrap text-[#212529]">
                  <span className="flex size-[48px] items-center justify-center rounded-full bg-[#ececec] text-[#757d84]">
                    <Line className="size-[23px]" w={1.400}>{icon}</Line>
                  </span>
                  {name}
                </button>
              ))}
            </div>
          </Card>

          <Card closed icon={<FontIcon />} title="Skrifttyper" sub="Gør din side unik med originale skrifttyper." />
          <Card closed icon={<SmileIcon />} title="Velkomstskærm" sub="Vis et billede, mens din side indlæses." />
          <Card closed icon={<QrIcon />} title="Navn på QR-koden" sub="Navngiv din QR-kode." />
          <Card closed icon={<LockIcon />} title="Adgangskode" help />
        </div>
        <Preview />
      </main>
    </div>
  );
}
